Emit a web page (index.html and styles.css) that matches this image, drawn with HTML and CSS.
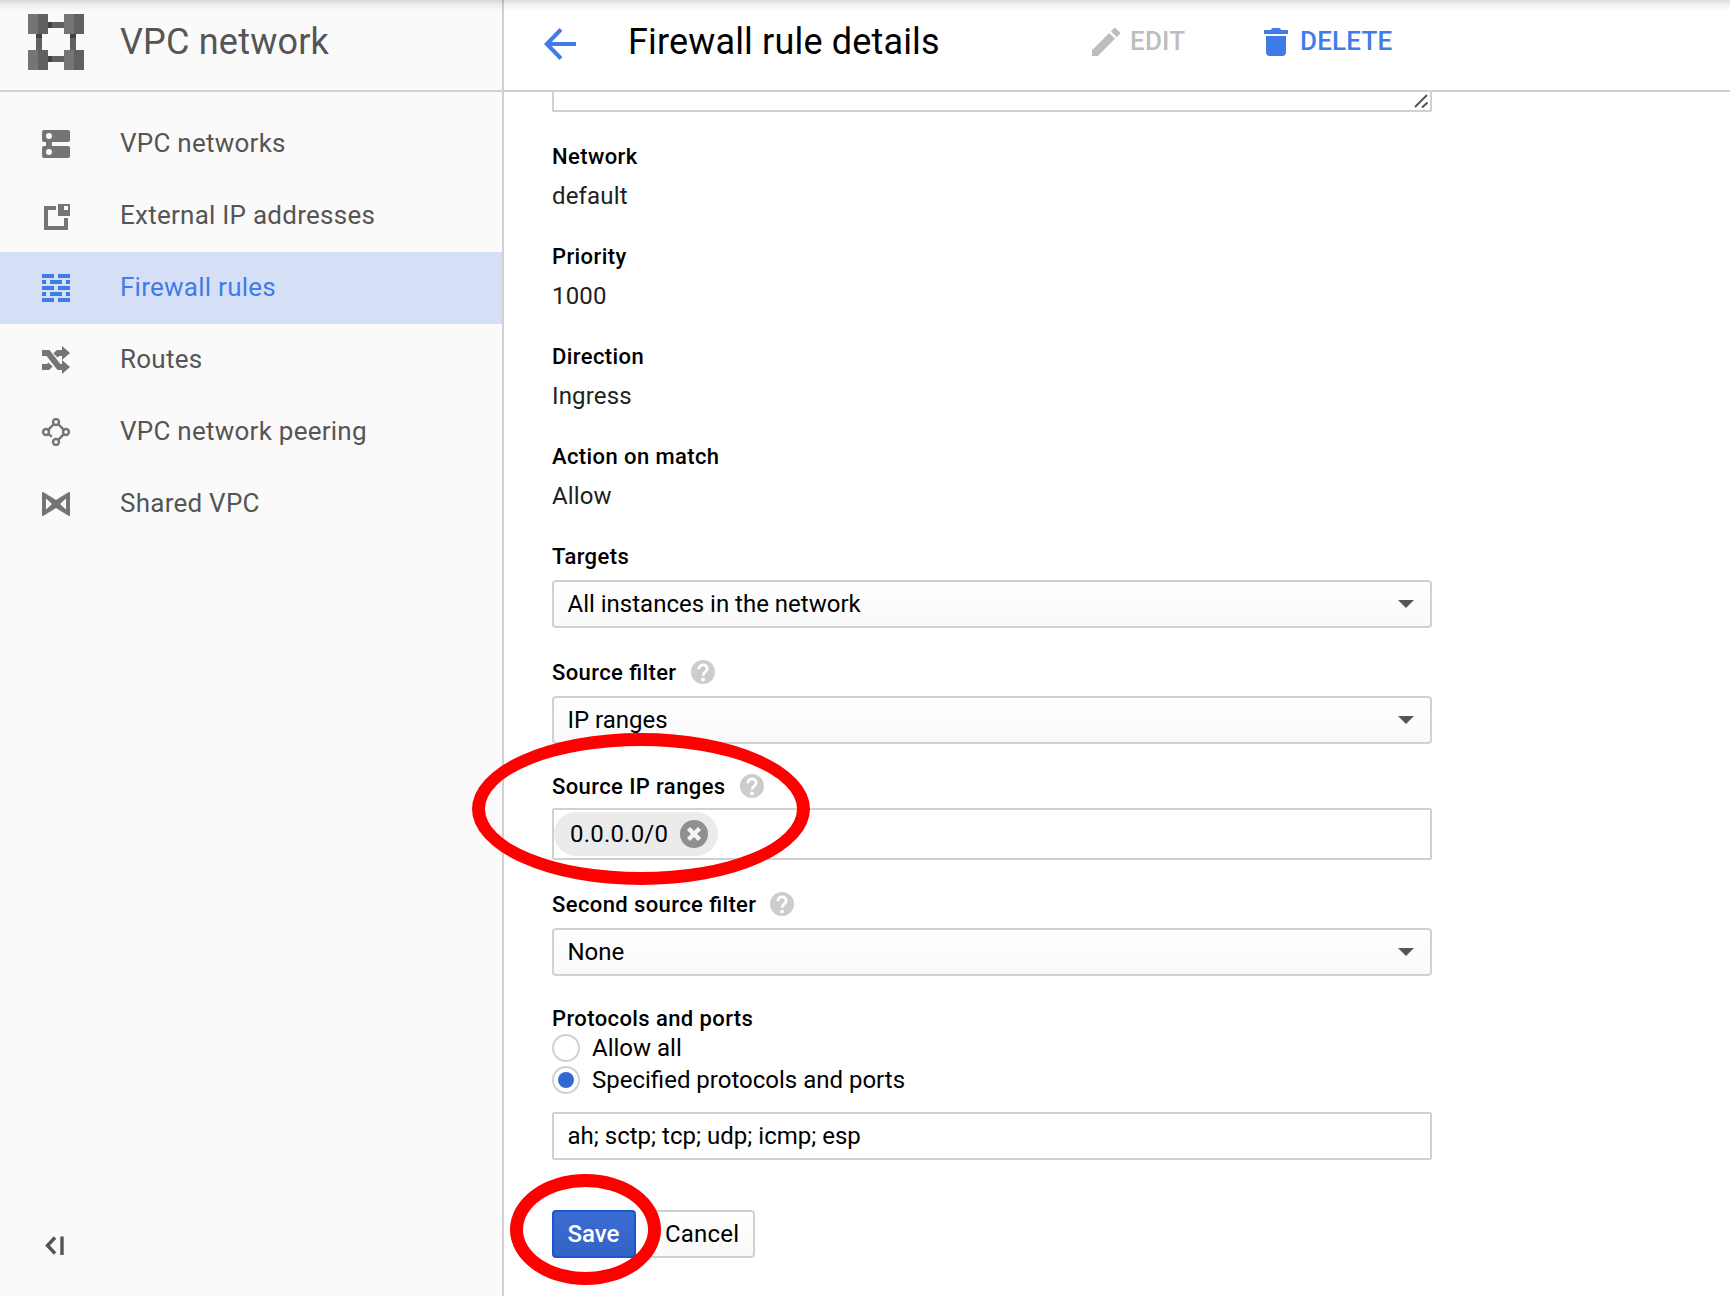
FILE: index.html
```html
<!DOCTYPE html>
<html lang="en">
<head>
<meta charset="utf-8">
<title>Firewall rule details</title>
<link rel="stylesheet" href="styles.css">
</head>
<body>
<div class="app">
  <aside class="sidebar">
    <header class="product">
      <svg class="product-logo" viewBox="0 0 56 56" shape-rendering="crispEdges">
        <path fill="#616161" d="M20 8h16v6H20zM20 42h16v6H20zM8 20h6v16H8zM42 20h6v16h-6z"/>
        <path fill="#424242" d="M20 8h4v6h-4zM20 42h4v6h-4zM8 20h6v4H8zM42 20h6v4h-6z"/>
        <path fill="#757575" d="M0 0h10v20H0zM36 0h10v20H36zM0 36h10v20H0zM36 36h10v20H36z"/>
        <path fill="#616161" d="M10 0h10v20H10zM46 0h10v20H46zM10 36h10v20H10zM46 36h10v20H46z"/>
      </svg>
      <span class="product-name">VPC network</span>
    </header>
    <nav class="nav">
      <a class="nav-item">
        <svg class="nav-icon" viewBox="0 0 28 28"><rect width="28" height="12" rx="2"/><rect y="16" width="28" height="12" rx="2"/><path d="M4 11h6v6H4z"/><circle class="hole" cx="7" cy="6" r="3"/><circle class="hole" cx="7" cy="22" r="3"/></svg>
        <span class="nav-label">VPC networks</span>
      </a>
      <a class="nav-item">
        <svg class="nav-icon" viewBox="0 0 28 28"><path d="M2 4h12v4H6v16h16v-8h4v12H2z"/><path fill-rule="evenodd" d="M16 2h12v12H16zM22 4v4h4V4z"/></svg>
        <span class="nav-label">External IP addresses</span>
      </a>
      <a class="nav-item active">
        <svg class="nav-icon" viewBox="0 0 28 28"><path d="M0 0h12v4H0zM16 0h12v4H16zM0 6h4v4H0zM8 6h12v4H8zM24 6h4v4h-4zM0 12h12v4H0zM16 12h12v4H16zM0 18h4v4H0zM8 18h12v4H8zM24 18h4v4h-4zM0 24h12v4H0zM16 24h12v4H16z"/></svg>
        <span class="nav-label">Firewall rules</span>
      </a>
      <a class="nav-item">
        <svg class="nav-icon" viewBox="0 0 28 28"><path class="line thick" d="M0 7H6L17 21H21M0 21H6L8.5 18.5M13.5 9.5L16 7H21"/><path d="M20 0L28 7L20 14zM20 14L28 21L20 28z"/></svg>
        <span class="nav-label">Routes</span>
      </a>
      <a class="nav-item">
        <svg class="nav-icon" viewBox="0 0 28 28"><g class="line thin"><circle cx="14" cy="4" r="3"/><circle cx="4" cy="14" r="3"/><circle cx="24" cy="14" r="3"/><circle cx="14" cy="24" r="3"/><path d="M6.2 11.8L11.8 6.2M16.2 6.2L21.8 11.8M21.8 16.2L16.2 21.8M6.2 16L9.8 18.6"/></g></svg>
        <span class="nav-label">VPC network peering</span>
      </a>
      <a class="nav-item">
        <svg class="nav-icon" viewBox="0 0 28 28"><path fill-rule="evenodd" d="M0 3Q0 1.400 1.600 2.200L14 10L26.400 2.200Q28 1.400 28 3V25Q28 26.600 26.400 25.800L14 18L1.600 25.800Q0 26.600 0 25zM4 8.500V19.500L10 14zM24 8.500V19.500L18 14z"/></svg>
        <span class="nav-label">Shared VPC</span>
      </a>
    </nav>
    <svg class="collapse" viewBox="0 0 20 20"><path d="M10 1.500L2.500 9.500L10 17.500M17 .5V19"/></svg>
  </aside>

  <main class="main">
    <header class="toolbar">
      <svg class="back" viewBox="0 0 32 32"><path d="M17 1.500L2.800 16L17 30.500M3 16H32"/></svg>
      <h1 class="title">Firewall rule details</h1>
      <a class="action edit">
        <svg class="edit-icon" viewBox="3 3 18 18"><path d="M3 17.250V21h3.750L17.810 9.940l-3.750-3.750L3 17.250zM20.710 7.040a1 1 0 0 0 0-1.410l-2.340-2.340a1 1 0 0 0-1.410 0l-1.830 1.830 3.750 3.750 1.830-1.830z"/></svg>
        <span>EDIT</span>
      </a>
      <a class="action delete">
        <svg class="delete-icon" viewBox="0 0 24 28"><path d="M0 2H6.500L8.500 0H15.500L17.500 2H24V6H0zM2 8H22V24Q22 28 18 28H6Q2 28 2 24z"/></svg>
        <span>DELETE</span>
      </a>
    </header>

    <form class="form">
      <div class="textarea"><svg class="grip" viewBox="0 0 14 14"><path d="M1 13L13 1M8 13.500L13.500 8.500"/></svg></div>

      <section class="field"><div class="label"><span>Network</span></div><div class="value">default</div></section>
      <section class="field"><div class="label"><span>Priority</span></div><div class="value">1000</div></section>
      <section class="field"><div class="label"><span>Direction</span></div><div class="value">Ingress</div></section>
      <section class="field"><div class="label"><span>Action on match</span></div><div class="value">Allow</div></section>

      <section class="field">
        <div class="label"><span>Targets</span></div>
        <div class="box select"><span>All instances in the network</span><i class="caret"></i></div>
      </section>
      <section class="field">
        <div class="label"><span>Source filter</span><svg class="help" viewBox="0 0 24 24"><circle cx="12" cy="12" r="12"/><path d="M7.800 9.200C7.800 3.400 16.200 3.600 16.200 8.800C16.200 12 12 12.200 12 15.800"/><circle class="dot" cx="12" cy="19.500" r="1.900"/></svg></div>
        <div class="box select"><span>IP ranges</span><i class="caret"></i></div>
      </section>
      <section class="field ranges">
        <div class="label"><span>Source IP ranges</span><svg class="help" viewBox="0 0 24 24"><circle cx="12" cy="12" r="12"/><path d="M7.800 9.200C7.800 3.400 16.200 3.600 16.200 8.800C16.200 12 12 12.200 12 15.800"/><circle class="dot" cx="12" cy="19.500" r="1.900"/></svg></div>
        <div class="chips">
          <div class="chip"><span>0.0.0.0/0</span><svg class="remove" viewBox="0 0 28 28"><circle cx="14" cy="14" r="14"/><path d="M8.500 8.500L19.500 19.500M19.500 8.500L8.500 19.500"/></svg></div>
        </div>
      </section>
      <section class="field">
        <div class="label"><span>Second source filter</span><svg class="help" viewBox="0 0 24 24"><circle cx="12" cy="12" r="12"/><path d="M7.800 9.200C7.800 3.400 16.200 3.600 16.200 8.800C16.200 12 12 12.200 12 15.800"/><circle class="dot" cx="12" cy="19.500" r="1.900"/></svg></div>
        <div class="box select"><span>None</span><i class="caret"></i></div>
      </section>
      <section class="field protocols">
        <div class="label"><span>Protocols and ports</span></div>
        <div class="option"><i class="radio"></i><span>Allow all</span></div>
        <div class="option"><i class="radio checked"></i><span>Specified protocols and ports</span></div>
        <div class="box input"><span>ah; sctp; tcp; udp; icmp; esp</span></div>
      </section>
      <div class="buttons">
        <div class="button primary">Save</div>
        <div class="button">Cancel</div>
      </div>
    </form>
  </main>
  <div class="top-shadow"></div>
  <div class="marker marker-ranges"></div>
  <div class="marker marker-save"></div>
</div>
</body>
</html>
```
FILE: styles.css
```css
* { box-sizing: border-box; }

body {
  margin: 0;
  background: #fff;
  color: #000;
  font-family: Roboto, "Liberation Sans", sans-serif;
  font-size: 24px;
}

.app {
  position: relative;
  display: flex;
  width: 1730px;
  height: 1296px;
  overflow: hidden;
}

/* Sidebar */
.sidebar {
  display: flex;
  flex-direction: column;
  width: 504px;
  background: #fafafa;
  border-right: 2px solid #d1d1d1;
}

.product {
  display: flex;
  gap: 36px;
  height: 92px;
  padding: 14px 0 0 28px;
  border-bottom: 2px solid #d1d1d1;
}

.product-logo { width: 56px; height: 56px; }

.product-name {
  color: #555;
  font-size: 36px;
  letter-spacing: .2px;
  line-height: 56px;
}

.nav { padding-top: 16px; }

.nav-item {
  display: flex;
  align-items: center;
  gap: 50px;
  height: 72px;
  padding-left: 42px;
  color: #555;
}

.nav-icon { width: 28px; height: 28px; fill: #757575; }
.nav-label { font-size: 26px; letter-spacing: .25px; line-height: 32px; padding-bottom: 3px; }
.nav-item.active { background: #d5e0f7; color: #3f7ce8; }
.nav-item.active .nav-icon { fill: #3f7ce8; }
.hole { fill: #fafafa; }
.line { fill: none; stroke: #757575; }
.thick { stroke-width: 6; }
.thin { stroke-width: 2.4; }

.collapse {
  width: 20px;
  height: 20px;
  margin: auto 0 40px 45px;
  fill: none;
  stroke: #555;
  stroke-width: 3.4;
}

/* Toolbar */
.main { flex: 1; }

.toolbar {
  display: flex;
  align-items: flex-start;
  height: 92px;
  padding: 28px 0 0 40px;
  border-bottom: 2px solid #d1d1d1;
}

.back {
  width: 32px;
  height: 32px;
  fill: none;
  stroke: #3f7ce8;
  stroke-width: 4;
}

.title {
  width: 464px;
  margin: -14px 0 0 52px;
  font-size: 36px;
  font-weight: 400;
  letter-spacing: .16px;
  line-height: 56px;
}

.action {
  display: flex;
  font-size: 26px;
  font-weight: 500;
  letter-spacing: .2px;
  line-height: 28px;
}

.action span { margin-top: -1px; }
.edit { gap: 10px; width: 172px; color: #bdbdbd; fill: #bdbdbd; }
.delete { gap: 12px; color: #3f7ce8; fill: #3f7ce8; }
.edit-icon { width: 28px; height: 28px; }
.delete-icon { width: 24px; height: 28px; }

/* Form */
.form {
  display: flex;
  flex-direction: column;
  gap: 30px;
  width: 880px;
  margin-left: 48px;
}

.textarea {
  display: flex;
  justify-content: flex-end;
  height: 20px;
  padding: 2px 2px 0 0;
  border: 2px solid #d1d1d1;
  border-top: 0;
  border-radius: 0 0 2px 2px;
}

.grip { width: 14px; height: 14px; fill: none; stroke: #555; stroke-width: 2; }

.label {
  display: flex;
  align-items: center;
  gap: 14px;
  height: 28px;
  font-size: 22px;
  font-weight: 500;
  font-feature-settings: "liga";
  letter-spacing: .4px;
  line-height: 28px;
}

.label span { padding-top: 2px; }

.value {
  height: 32px;
  margin-top: 10px;
  color: #212121;
  letter-spacing: .15px;
  line-height: 32px;
}

.box {
  display: flex;
  align-items: center;
  height: 48px;
  padding: 0 13.5px;
  border: 2px solid #d1d1d1;
}

.box span { line-height: 44px; }

.select {
  justify-content: space-between;
  margin-top: 10px;
  padding-right: 16px;
  border-radius: 4px;
  background: linear-gradient(#fff, #f9f9f9);
}

.caret {
  border: 8px solid transparent;
  border-top-color: #555;
  border-bottom: 0;
}

.help { width: 24px; height: 24px; fill: #ccc; }
.help path { fill: none; stroke: #fff; stroke-width: 2.7; }
.dot { fill: #fff; }

.ranges { margin-top: -2px; }

.chips {
  display: flex;
  height: 52px;
  margin-top: 8px;
  padding-top: 2px;
  border: 2px solid #d1d1d1;
  border-radius: 2px;
}

.chip {
  display: flex;
  align-items: center;
  justify-content: space-between;
  width: 164px;
  height: 44px;
  padding: 0 10px 0 16px;
  border-radius: 22px;
  background: #ebebeb;
  letter-spacing: .2px;
}

.remove { width: 28px; height: 28px; fill: #8f8f8f; }
.remove path { stroke: #f5f5f5; stroke-width: 4.4; }

.protocols { margin-top: -2px; }

.option {
  display: flex;
  align-items: center;
  gap: 12px;
  height: 28px;
  margin-top: 2px;
  line-height: 28px;
}

.option + .option { margin-top: 4px; }
.option span { margin-top: -1px; }

.radio {
  display: grid;
  place-items: center;
  width: 28px;
  height: 28px;
  border: 2px solid #d1d1d1;
  border-radius: 50%;
}

.checked::after {
  content: "";
  width: 16px;
  height: 16px;
  border-radius: 50%;
  background: #3367d6;
}

.input { margin-top: 18px; border-radius: 2px; }

.buttons { display: flex; gap: 13px; margin-top: 20px; }

.button {
  height: 48px;
  padding: 0 14px;
  border: 2px solid #d1d1d1;
  border-radius: 4px;
  background: linear-gradient(#fff, #f9f9f9);
  letter-spacing: .2px;
  line-height: 44px;
}

.primary {
  width: 84px;
  padding: 0 13.5px;
  border-color: #1a56cc;
  background: linear-gradient(#3b6cd4, #3363c4);
  color: #fff;
  font-weight: 500;
  letter-spacing: 0;
}

/* Overlays */
.top-shadow {
  position: absolute;
  top: 0;
  left: 0;
  width: 100%;
  height: 12px;
  background: linear-gradient(rgba(0, 0, 0, .14), rgba(0, 0, 0, .05) 40%, transparent);
}

.marker {
  position: absolute;
  border: 13px solid #f00;
  border-radius: 50%;
}

.marker-ranges { left: 472px; top: 733px; width: 338px; height: 152px; }
.marker-save { left: 510px; top: 1174px; width: 151px; height: 111px; }
```
